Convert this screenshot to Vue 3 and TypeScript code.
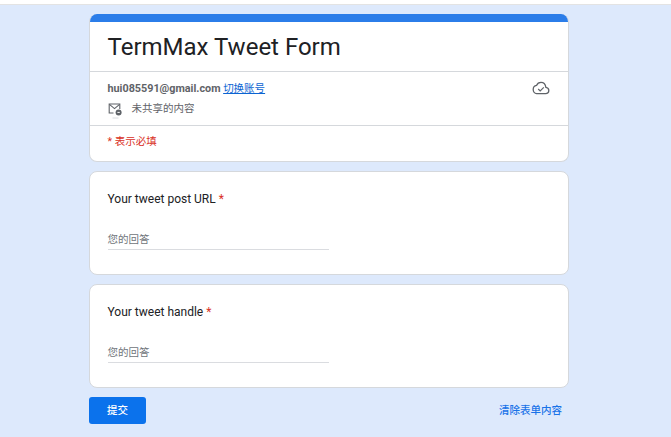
<script setup lang="ts">
const questions: string[] = ['Your tweet post URL', 'Your tweet handle']
</script>

<template>
  <div class="page">
    <main class="column">
      <section class="card head">
        <div class="band"></div>
        <h1 class="title">TermMax Tweet Form</h1>
        <div class="account">
          <div class="account-text">
            <div class="mail-line"><b>hui085591@gmail.com</b> <a class="switch">切换账号</a></div>
            <div class="share-line">
              <svg class="mail-icon" width="14" height="17" viewBox="0 0 14 17" fill="none">
                <path d="M5.500 11H1.200V2h10.600v5" stroke="#5f6368" stroke-width="1.100" />
                <path d="M1.400 2.400 6.500 6.600l5.100-4.200" stroke="#5f6368" stroke-width="1.100" />
                <circle cx="10.600" cy="10.400" r="3" fill="#5f6368" />
                <path d="M9.400 10.400h2.400" stroke="#fff" stroke-width="1" />
                <path d="M4.500 16h6" stroke="#dadce0" stroke-width="1" />
              </svg>
              <span>未共享的内容</span>
            </div>
          </div>
          <svg class="cloud" width="18" height="14" viewBox="0 0 18 14" fill="none">
            <path d="M4.600 12.600h8.900c1.900 0 3.300-1.400 3.300-3.100 0-1.700-1.300-3-2.900-3.200C13.400 3.500 11.500 1.400 9 1.400 7 1.400 5.300 2.600 4.500 4.400 2.600 4.700 1.200 6.400 1.200 8.500c0 2.300 1.500 4.100 3.400 4.100Z" stroke="#5f6368" stroke-width="1.300" />
            <path d="m6.200 8 2 2 3.600-3.600" stroke="#5f6368" stroke-width="1.200" />
          </svg>
        </div>
        <div class="required-note">* 表示必填</div>
      </section>

      <section v-for="q in questions" :key="q" class="card question">
        <div class="q-label">{{ q }} <span class="star">*</span></div>
        <div class="answer">您的回答</div>
      </section>

      <div class="actions">
        <button class="submit" type="button">提交</button>
        <button class="clear" type="button">清除表单内容</button>
      </div>
    </main>
  </div>
</template>

<style>
html, body { margin: 0; background: #fff; }
</style>

<style scoped>
.page {
  box-sizing: border-box;
  height: 433px;
  overflow: hidden;
  margin-top: 4px;
  padding-top: 9px;
  background: #dde9fc;
  border-top: 1px solid #e3e3e3;
  font-family: Roboto, "Noto Sans CJK SC", sans-serif;
}
.column {
  width: 480px;
  margin-left: 89px;
  display: flex;
  flex-direction: column;
  gap: 9px;
}
.card {
  box-sizing: border-box;
  background: #fff;
  border: 1px solid #d5d8dc;
  border-radius: 8px;
  overflow: hidden;
}
.head { height: 148px; border-top: 0; }
.band { height: 8px; background: #2b7de9; }
.title {
  margin: 0;
  height: 50px;
  box-sizing: border-box;
  padding: 9px 0 0 17.500px;
  font-size: 24px;
  line-height: 32px;
  font-weight: 400;
  color: #202124;
  border-bottom: 1px solid #d5d8dc;
}
.account {
  height: 54px;
  box-sizing: border-box;
  padding: 9px 18px 0 17.500px;
  display: flex;
  justify-content: space-between;
  align-items: flex-start;
  border-bottom: 1px solid #d5d8dc;
}
.mail-line { font-size: 10.500px; line-height: 15px; color: #5f6368; }
.mail-line b { font-size: 10.800px; }
.switch { color: #0b64d2; text-decoration: underline; }
.share-line {
  display: flex;
  align-items: flex-start;
  gap: 10px;
  margin-top: 6px;
  font-size: 10.500px;
  line-height: 14px;
  color: #5f6368;
}
.cloud { margin-top: 0; }
.required-note {
  padding: 9px 0 0 17.500px;
  font-size: 10.500px;
  line-height: 14px;
  color: #d93025;
}
.question { height: 104px; padding: 20px 17.500px 0; }
.q-label { font-size: 12px; line-height: 15px; color: #202124; }
.star { color: #d93025; }
.answer {
  width: 221px;
  margin-top: 25px;
  padding-bottom: 2px;
  font-size: 10.500px;
  line-height: 15px;
  color: #70757a;
  border-bottom: 1px solid #dadce0;
}
.actions {
  display: flex;
  justify-content: space-between;
  align-items: center;
  height: 27px;
}
.submit {
  width: 57px;
  height: 27px;
  border: 0;
  border-radius: 3px;
  padding: 0 0 2px;
  background: #0b72ec;
  color: #fff;
  font: 500 10.500px Roboto, "Noto Sans CJK SC", sans-serif;
}
.clear {
  border: 0;
  padding: 0 7px 2px 0;
  background: none;
  color: #1a73e8;
  font: 500 10.500px Roboto, "Noto Sans CJK SC", sans-serif;
}
</style>
